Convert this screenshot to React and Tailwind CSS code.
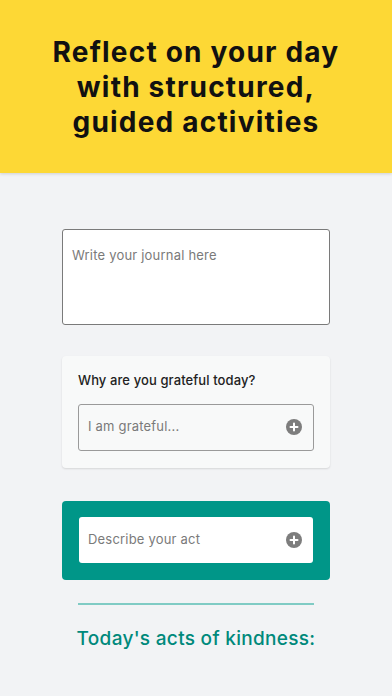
// Guided journal onboarding screen.

const FONT = { fontFamily: 'Inter, "Noto Sans", sans-serif' };

function PlusIcon() {
  return (
    <svg width="16" height="16" viewBox="0 0 16 16" aria-hidden className="shrink-0">
      <circle cx="8" cy="8" r="8" fill="#7d7d7d" />
      <path d="M8 4.5v7M4.5 8h7" stroke="#fff" strokeWidth="2" strokeLinecap="round" />
    </svg>
  );
}

function AddField({ placeholder, className }) {
  return (
    <div className={'flex items-center justify-between rounded-[3px] pl-[9px] pr-[11px] ' + className}>
      <span className="text-[13px] text-[#7a7a7a] tracking-[0.2px]">{placeholder}</span>
      <PlusIcon />
    </div>
  );
}

export default function App() {
  return (
    <div className="w-[392px] h-[696px] bg-[#f2f3f5] flex flex-col overflow-hidden" style={FONT}>
      <header className="h-[173px] shrink-0 bg-[#fdd835] flex items-center justify-center shadow-[0_1px_3px_rgba(0,0,0,0.15)]">
        <h1 className="text-center text-[28px] leading-[35px] font-bold text-[#111] tracking-[1.2px] pt-[1px]">
          Reflect on your day
          <br />
          with structured,
          <br />
          guided activities
        </h1>
      </header>

      <main className="flex flex-col px-[62px] pt-[56px]">
        <div className="h-[96px] bg-white border border-[#7a7a7a] rounded-[3px] px-[9px] pt-[12px]">
          <span className="text-[13px] text-[#7a7a7a] tracking-[0.2px]">Write your journal here</span>
        </div>

        <section className="mt-[31px] h-[112px] bg-[#f8f9f9] rounded-[4px] shadow-[0_1px_2px_rgba(0,0,0,0.12)] px-[16px] pt-[15px]">
          <p className="text-[13px] font-medium text-[#222] tracking-[0.1px]">Why are you grateful today?</p>
          <AddField
            placeholder="I am grateful..."
            className="mt-[13px] h-[47px] border border-[#9a9a9a] bg-[#f8f9f9]"
          />
        </section>

        <section className="mt-[33px] h-[79px] bg-[#009688] rounded-[4px] px-[17px] pt-[16px]">
          <AddField placeholder="Describe your act" className="h-[46px] bg-white" />
        </section>

        <div className="mt-[23px] mx-[16px] h-[2px] bg-[#80cbc4]" />

        <h2 className="mt-[20px] text-center text-[19px] font-medium text-[#00897b] tracking-[0.3px]">
          Today's acts of kindness:
        </h2>
      </main>
    </div>
  );
}
